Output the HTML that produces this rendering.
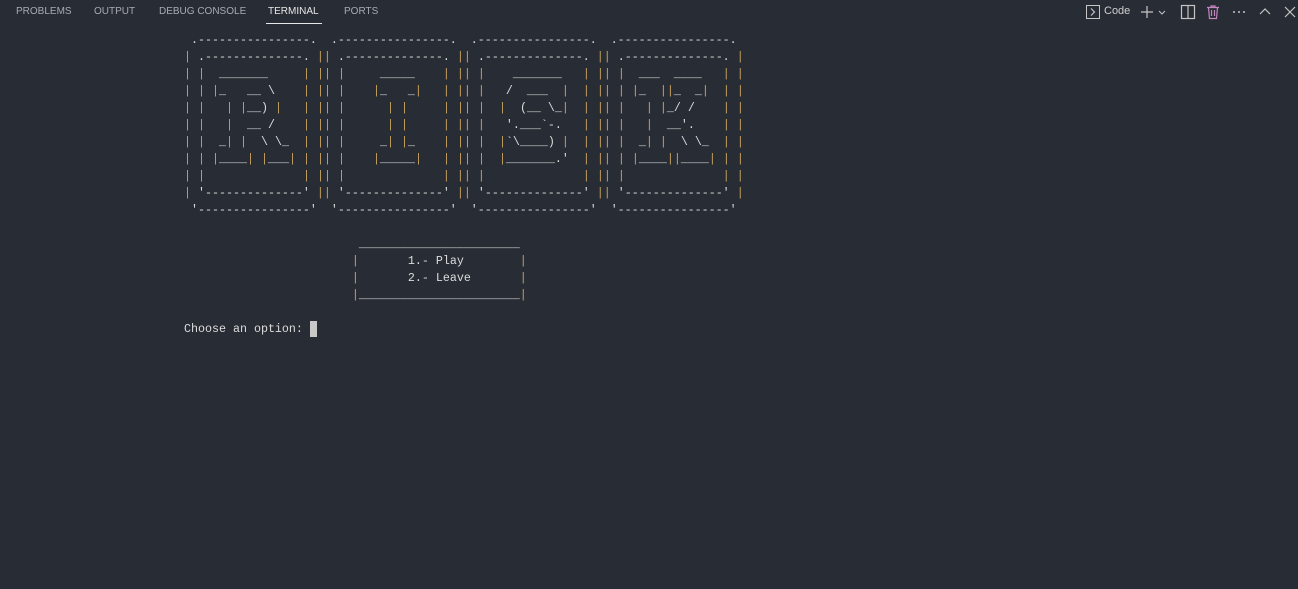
<!DOCTYPE html>
<html><head><meta charset="utf-8"><style>
html,body{margin:0;padding:0;background:#282c34;width:1298px;height:589px;overflow:hidden}
.tabs{position:absolute;top:0;left:0;right:0;height:24px;font-family:"Liberation Sans",sans-serif;font-size:10px;color:#a8abb0}
.tabs span{position:absolute;top:6px}
.act{color:#e7e7e7}
.ul{position:absolute;left:266px;top:23px;width:56px;height:1px;background:#e7e7e7}
pre{position:absolute;left:184px;top:32px;margin:0;font-family:"Liberation Mono",monospace;font-size:11.67px;line-height:17px;color:#dcdcdc}
pre i{font-style:normal;color:#c4a060}
.cur{display:inline-block;width:7px;height:16px;background:#c9c9c9;vertical-align:top}
.ic{position:absolute;top:4px}
</style></head><body>
<div class="tabs">
<span style="left:16px">PROBLEMS</span>
<span style="left:94px">OUTPUT</span>
<span style="left:159px">DEBUG CONSOLE</span>
<span class="act" style="left:268px">TERMINAL</span>
<span style="left:344px">PORTS</span>
<div class="ul"></div>
<svg class="ic" style="left:1085px" width="16" height="16" viewBox="0 0 16 16"><rect x="1.5" y="1.5" width="13" height="13" fill="none" stroke="#c5c5c5"/><path d="M6 4.5l3.5 3.5L6 11.5" fill="none" stroke="#c5c5c5" stroke-width="1.2"/></svg>
<span style="left:1104px;top:5px;color:#cfcfcf;font-size:11px">Code</span>
<svg class="ic" style="left:1139px" width="30" height="16" viewBox="0 0 30 16"><path d="M8 2v12M2 8h12" stroke="#c5c5c5" stroke-width="1.2"/><path d="M20 7l3 3 3-3" fill="none" stroke="#c5c5c5"/></svg>
<svg class="ic" style="left:1180px" width="16" height="16" viewBox="0 0 16 16"><rect x="1.5" y="1.5" width="13" height="13" fill="none" stroke="#c5c5c5" stroke-width="1.2"/><path d="M8 1.5v13" stroke="#c5c5c5" stroke-width="1.2"/></svg>
<svg class="ic" style="left:1205px" width="16" height="16" viewBox="0 0 16 16"><path d="M2 3.5h12M6 3.5V2h4v1.5M3.5 3.5l1 11h7l1-11M6.5 6v6M9.5 6v6" fill="none" stroke="#c586c0" stroke-width="1.2"/></svg>
<svg class="ic" style="left:1231px" width="16" height="16" viewBox="0 0 16 16"><circle cx="3" cy="8" r="1" fill="#c5c5c5"/><circle cx="8" cy="8" r="1" fill="#c5c5c5"/><circle cx="13" cy="8" r="1" fill="#c5c5c5"/></svg>
<svg class="ic" style="left:1257px" width="16" height="16" viewBox="0 0 16 16"><path d="M3 10l5-5 5 5" fill="none" stroke="#c5c5c5" stroke-width="1.2"/></svg>
<svg class="ic" style="left:1282px" width="16" height="16" viewBox="0 0 16 16"><path d="M3 3l10 10M13 3L3 13" stroke="#c5c5c5" stroke-width="1.2"/></svg>
</div>
<pre id="t"> .----------------.  .----------------.  .----------------.  .----------------. 
| .--------------. || .--------------. || .--------------. || .--------------. |
| |  _______     | || |     _____    | || |    _______   | || |  ___  ____   | |
| | |_   __ \    | || |    |_   _|   | || |   /  ___  |  | || | |_  ||_  _|  | |
| |   | |__) |   | || |      | |     | || |  |  (__ \_|  | || |   | |_/ /    | |
| |   |  __ /    | || |      | |     | || |   '.___`-.   | || |   |  __'.    | |
| |  _| |  \ \_  | || |     _| |_    | || |  |`\____) |  | || |  _| |  \ \_  | |
| | |____| |___| | || |    |_____|   | || |  |_______.'  | || | |____||____| | |
| |              | || |              | || |              | || |              | |
| '--------------' || '--------------' || '--------------' || '--------------' |
 '----------------'  '----------------'  '----------------'  '----------------' 

                         _______________________
                        |       1.- Play        |
                        |       2.- Leave       |
                        |_______________________|

Choose an option: <span class="cur"></span></pre>
<script>
var t=document.getElementById('t');t.innerHTML=t.innerHTML.replace(/\|/g,'<i>|</i>');
</script>
</body></html>
